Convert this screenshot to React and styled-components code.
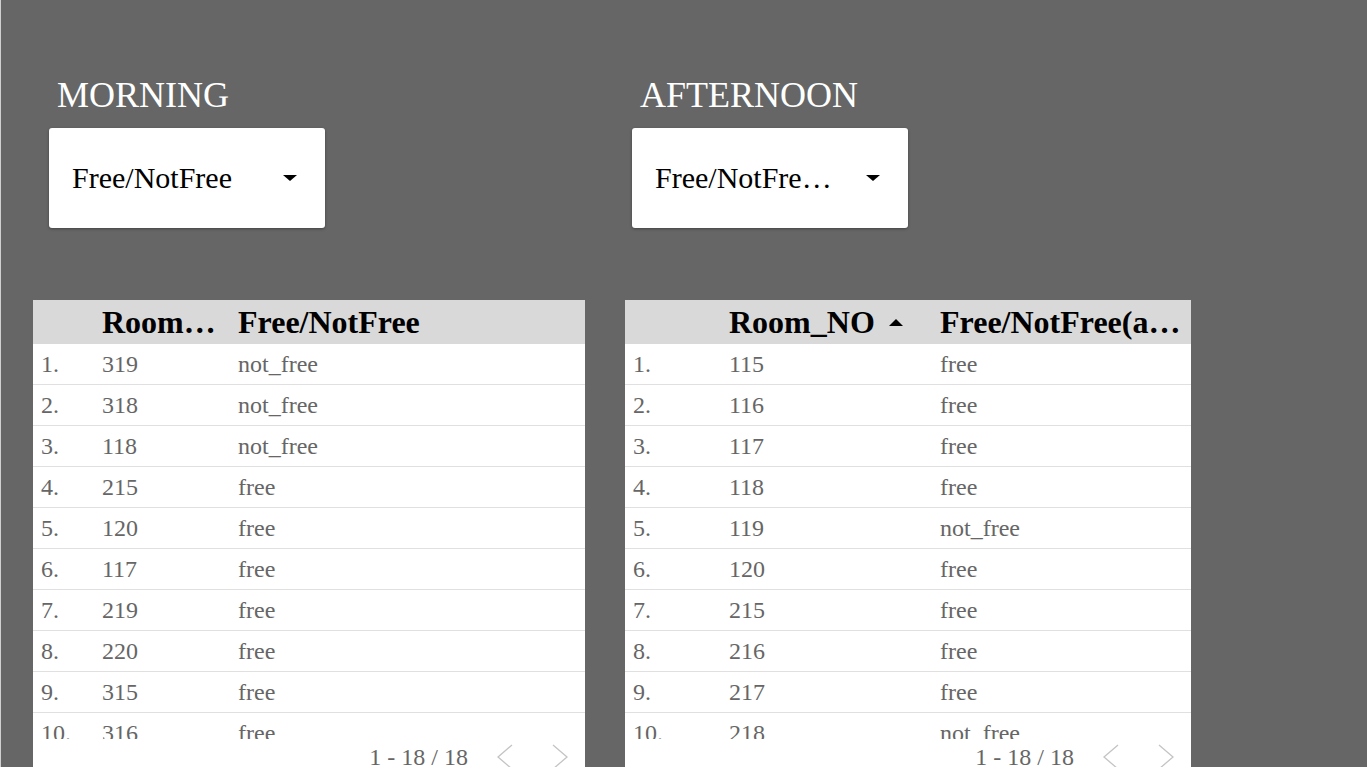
import React from "react";
import styled, { createGlobalStyle } from "styled-components";

const GlobalStyle = createGlobalStyle`
  html, body {
    margin: 0;
    padding: 0;
    height: 100%;
    overflow: hidden;
    background: #666666;
  }
  body {
    font-family: "Liberation Serif", "Times New Roman", serif;
  }
`;

const morning = [
  ["319", "not_free"],
  ["318", "not_free"],
  ["118", "not_free"],
  ["215", "free"],
  ["120", "free"],
  ["117", "free"],
  ["219", "free"],
  ["220", "free"],
  ["315", "free"],
  ["316", "free"],
];

const afternoon = [
  ["115", "free"],
  ["116", "free"],
  ["117", "free"],
  ["118", "free"],
  ["119", "not_free"],
  ["120", "free"],
  ["215", "free"],
  ["216", "free"],
  ["217", "free"],
  ["218", "not_free"],
];

function App() {
  return (
    <Page>
      <GlobalStyle />
      <Controls>
        <Filter>
          <Title>MORNING</Title>
          <Dropdown>
            <DropLabel>Free/NotFree</DropLabel>
            <Caret />
          </Dropdown>
        </Filter>
        <Filter>
          <Title>AFTERNOON</Title>
          <Dropdown>
            <DropLabel>Free/NotFree(afternoon)</DropLabel>
            <Caret />
          </Dropdown>
        </Filter>
      </Controls>
      <Tables>
        <DataTable
          width={552}
          cols="61px 136px 1fr"
          headers={["Room_NO", "Free/NotFree"]}
          rows={morning}
        />
        <DataTable
          width={566}
          cols="96px 211px 1fr"
          headers={["Room_NO", "Free/NotFree(afternoon)"]}
          sorted
          rows={afternoon}
        />
      </Tables>
    </Page>
  );
}

function DataTable({ width, cols, headers, rows, sorted }) {
  return (
    <Table $width={width}>
      <HeadRow $cols={cols}>
        <span />
        <HeadCell>
          <HeadText>{headers[0]}</HeadText>
          {sorted && <SortUp />}
        </HeadCell>
        <HeadCell>
          <HeadText>{headers[1]}</HeadText>
        </HeadCell>
      </HeadRow>
      <Body>
        {rows.map((r, i) => (
          <Row key={i} $cols={cols}>
            <Cell>{i + 1}.</Cell>
            <Cell>{r[0]}</Cell>
            <Cell>{r[1]}</Cell>
          </Row>
        ))}
      </Body>
      <Footer>
        <span>1 - 18 / 18</span>
        <Chevron $gap={29}>
          <svg width="16" height="26" viewBox="0 0 16 26">
            <polyline points="15,1 1,13 15,25" fill="none" stroke="#c4c4c4" strokeWidth="1.3" />
          </svg>
        </Chevron>
        <Chevron $gap={39}>
          <svg width="16" height="26" viewBox="0 0 16 26">
            <polyline points="1,1 15,13 1,25" fill="none" stroke="#c4c4c4" strokeWidth="1.3" />
          </svg>
        </Chevron>
      </Footer>
    </Table>
  );
}

const Page = styled.div`
  min-height: 100vh;
  border-left: 1px solid #d0d0d0;
  box-sizing: border-box;
  padding-top: 75px;
`;

const Controls = styled.div`
  display: flex;
  gap: 307px;
  padding-left: 48px;
`;

const Filter = styled.div`
  display: flex;
  flex-direction: column;
  gap: 13px;
`;

const Title = styled.div`
  color: #ffffff;
  font-size: 36px;
  line-height: 40px;
  padding-left: 8px;
`;

const Dropdown = styled.div`
  width: 276px;
  height: 100px;
  box-sizing: border-box;
  background: #ffffff;
  border-radius: 3px;
  box-shadow: 0 1px 3px rgba(0, 0, 0, 0.35);
  display: flex;
  align-items: center;
  padding: 0 28px 0 23px;
  gap: 32px;
`;

const DropLabel = styled.span`
  flex: 1;
  min-width: 0;
  font-size: 30px;
  color: #000;
  white-space: nowrap;
  overflow: hidden;
  text-overflow: ellipsis;
`;

const Caret = styled.span`
  width: 0;
  height: 0;
  border-left: 7px solid transparent;
  border-right: 7px solid transparent;
  border-top: 6px solid #000;
`;

const Tables = styled.div`
  display: flex;
  gap: 40px;
  padding-left: 32px;
  margin-top: 72px;
  align-items: flex-start;
`;

const Table = styled.div`
  width: ${(p) => p.$width}px;
  background: #ffffff;
  display: flex;
  flex-direction: column;
`;

const HeadRow = styled.div`
  display: grid;
  grid-template-columns: ${(p) => p.$cols};
  height: 44px;
  align-items: center;
  background: #d9d9d9;
`;

const HeadCell = styled.div`
  display: flex;
  align-items: center;
  gap: 14px;
  min-width: 0;
  padding: 0 8px;
`;

const HeadText = styled.span`
  font-size: 32px;
  font-weight: bold;
  color: #000;
  white-space: nowrap;
  overflow: hidden;
  text-overflow: ellipsis;
  min-width: 0;
`;

const SortUp = styled.span`
  flex: none;
  width: 0;
  height: 0;
  border-left: 7px solid transparent;
  border-right: 7px solid transparent;
  border-bottom: 7px solid #000;
`;

const Body = styled.div`
  height: 395px;
  overflow: hidden;
`;

const Row = styled.div`
  display: grid;
  grid-template-columns: ${(p) => p.$cols};
  height: 41px;
  box-sizing: border-box;
  align-items: center;
  border-bottom: 1px solid #e0e0e0;
`;

const Cell = styled.div`
  padding: 0 8px;
  font-size: 24px;
  color: #666666;
  white-space: nowrap;
  overflow: hidden;
`;

const Footer = styled.div`
  height: 36px;
  display: flex;
  align-items: center;
  justify-content: flex-end;
  padding-right: 17px;
  font-size: 24px;
  color: #666666;
`;

const Chevron = styled.span`
  display: flex;
  margin-left: ${(p) => p.$gap}px;
`;

export default App;
